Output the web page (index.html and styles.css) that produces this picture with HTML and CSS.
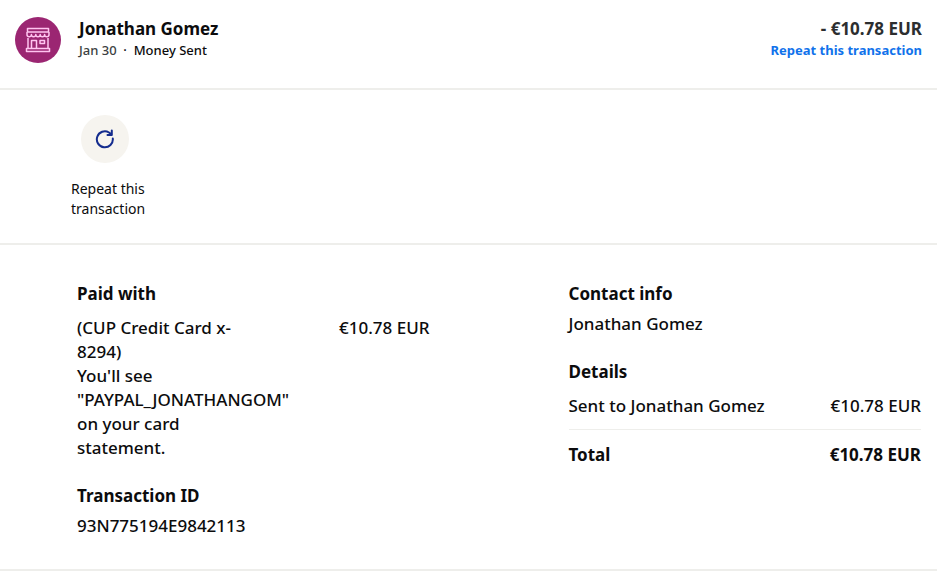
FILE: index.html
```html
<!DOCTYPE html>
<html lang="en">
<head>
<meta charset="utf-8">
<meta name="viewport" content="width=device-width, initial-scale=1">
<title>Transaction details</title>
<link rel="stylesheet" href="styles.css">
</head>
<body>
<main class="transaction">
  <header class="summary">
    <span class="avatar">
      <svg class="avatar-icon" viewBox="0 0 26 26" aria-hidden="true">
        <path d="M2.500 1.500h21v3.500h-21zM2 5v3.500M24 5v3.500M2 7.500c0 3 4.400 3 4.400 0c0 3 4.400 3 4.400 0c0 3 4.400 3 4.400 0c0 3 4.400 3 4.400 0c0 3 4.400 3 4.400 0M3 11v10M23 11v10M1.500 21.500h23v3h-23zM6.500 21v-7.500h5v7.500M15 13.500h4.500v3h-4.500z"/>
      </svg>
    </span>
    <div class="summary-text">
      <h1 class="summary-title">Jonathan Gomez</h1>
      <p class="summary-meta"><span class="date">Jan 30</span> &nbsp;·&nbsp; Money Sent</p>
    </div>
    <div class="summary-amount">
      <p class="amount">- €10.78 EUR</p>
      <a class="repeat-link" href="#">Repeat this transaction</a>
    </div>
  </header>

  <section class="actions">
    <button class="action" type="button">
      <span class="action-circle">
        <svg class="action-icon" viewBox="0 0 20 20" aria-hidden="true">
          <path d="M17.800 9.500A8 8 0 1 1 14 3.500L16.500 5.500M16.800 1.500V6H12.500"/>
        </svg>
      </span>
      <span class="action-label">Repeat this transaction</span>
    </button>
  </section>

  <section class="details">
    <div class="column">
      <section class="block">
        <h2 class="heading">Paid with</h2>
        <div class="row">
          <p class="source">(CUP Credit Card x-<wbr>8294)<br>You'll see "PAYPAL_JONATHANGOM" on your card statement.</p>
          <p>€10.78 EUR</p>
        </div>
      </section>
      <section class="block">
        <h2 class="heading">Transaction ID</h2>
        <p class="value">93N775194E9842113</p>
      </section>
    </div>
    <div class="column">
      <section class="block">
        <h2 class="heading">Contact info</h2>
        <p class="value">Jonathan Gomez</p>
      </section>
      <section class="block">
        <h2 class="heading">Details</h2>
        <div class="row">
          <p>Sent to Jonathan Gomez</p>
          <p>€10.78 EUR</p>
        </div>
        <div class="row total">
          <p>Total</p>
          <p>€10.78 EUR</p>
        </div>
      </section>
    </div>
  </section>
</main>
</body>
</html>
```
FILE: styles.css
```css
* {
  box-sizing: border-box;
}

body {
  margin: 0;
  background: #fff;
  color: #0c0c0d;
  font: 500 17px/24px "Noto Sans", sans-serif;
}

h1,
h2,
p {
  margin: 0;
}

.summary,
.actions,
.details {
  border-bottom: 2px solid #eeeeeb;
}

.summary {
  display: flex;
  align-items: flex-start;
  padding: 17px 15px 25px;
}

.avatar {
  display: flex;
  align-items: center;
  justify-content: center;
  width: 46px;
  height: 46px;
  margin-right: 18px;
  border-radius: 50%;
  background: #9b2672;
}

.avatar-icon {
  width: 26px;
  height: 26px;
  fill: none;
  stroke: #ffc4f0;
  stroke-width: 1.5;
  stroke-linejoin: round;
}

.summary-text {
  flex: 1;
}

.summary-title {
  font-size: 17px;
  font-weight: 700;
  line-height: 24px;
}

.summary-meta,
.repeat-link {
  font-size: 13px;
  line-height: 18px;
}

.date {
  color: #3c3f42;
}

.summary-amount {
  display: flex;
  flex-direction: column;
  align-items: flex-end;
}

.amount {
  color: #2c2e2f;
  font-size: 17px;
  font-weight: 700;
}

.repeat-link {
  color: #1072eb;
  font-weight: 700;
  text-decoration: none;
}

.actions {
  padding: 25px 71px 24px;
}

.action {
  display: flex;
  flex-direction: column;
  gap: 16px;
  width: 98px;
  padding: 0;
  border: 0;
  background: none;
  color: inherit;
  font: 14px/20px "Noto Sans", sans-serif;
  text-align: left;
  cursor: pointer;
}

.action-circle {
  display: flex;
  align-items: center;
  justify-content: center;
  width: 48px;
  height: 48px;
  margin-left: 10px;
  border-radius: 50%;
  background: #f6f4ef;
}

.action-icon {
  width: 20px;
  height: 20px;
  fill: none;
  stroke: #142c8e;
  stroke-width: 2;
  stroke-linecap: round;
  stroke-linejoin: round;
}

.details {
  display: grid;
  grid-template-columns: 1fr 1fr;
  gap: 139px;
  padding: 37px 16px 31px 77px;
}

.block + .block {
  margin-top: 24px;
}

.heading {
  font-size: 17px;
  font-weight: 700;
  line-height: 24px;
}

.value {
  margin-top: 6px;
}

.row {
  display: flex;
  justify-content: space-between;
  margin-top: 10px;
}

.source {
  width: 50%;
}

.total {
  padding-top: 13px;
  border-top: 1px solid #eeeeeb;
  margin-top: 11px;
  font-weight: 700;
}
```
